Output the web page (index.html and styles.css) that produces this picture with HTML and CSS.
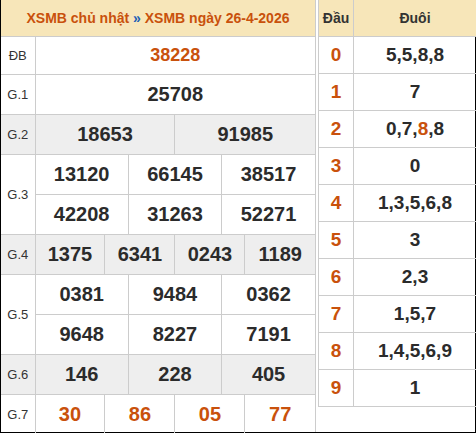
FILE: index.html
```html
<!DOCTYPE html>
<html lang="vi">
<head>
    <meta charset="UTF-8">
    <meta name="viewport" content="width=device-width, initial-scale=1.0">
    <title>XSMB ngày 26-4-2026</title>
    <link rel="stylesheet" href="styles.css">
</head>
<body>
    <div class="result-box">
        <div class="result-main">
            <table class="kq-table">
                <colgroup>
                    <col class="col-label">
                    <col span="12">
                </colgroup>
                <tr class="row-head">
                    <th colspan="13">XSMB chủ nhật <span class="sep">»</span> XSMB ngày 26-4-2026</th>
                </tr>
                <tr class="row-db">
                    <td class="label">ĐB</td>
                    <td colspan="12" class="num special">38228</td>
                </tr>
                <tr class="row-g1">
                    <td class="label">G.1</td>
                    <td colspan="12" class="num">25708</td>
                </tr>
                <tr class="row-40 alt">
                    <td class="label">G.2</td>
                    <td colspan="6" class="num">18653</td>
                    <td colspan="6" class="num">91985</td>
                </tr>
                <tr class="row-40">
                    <td class="label" rowspan="2">G.3</td>
                    <td colspan="4" class="num">13120</td>
                    <td colspan="4" class="num">66145</td>
                    <td colspan="4" class="num">38517</td>
                </tr>
                <tr class="row-40">
                    <td colspan="4" class="num">42208</td>
                    <td colspan="4" class="num">31263</td>
                    <td colspan="4" class="num">52271</td>
                </tr>
                <tr class="row-40 alt">
                    <td class="label">G.4</td>
                    <td colspan="3" class="num">1375</td>
                    <td colspan="3" class="num">6341</td>
                    <td colspan="3" class="num">0243</td>
                    <td colspan="3" class="num">1189</td>
                </tr>
                <tr class="row-40">
                    <td class="label" rowspan="2">G.5</td>
                    <td colspan="4" class="num">0381</td>
                    <td colspan="4" class="num">9484</td>
                    <td colspan="4" class="num">0362</td>
                </tr>
                <tr class="row-40">
                    <td colspan="4" class="num">9648</td>
                    <td colspan="4" class="num">8227</td>
                    <td colspan="4" class="num">7191</td>
                </tr>
                <tr class="row-40 alt">
                    <td class="label">G.6</td>
                    <td colspan="4" class="num">146</td>
                    <td colspan="4" class="num">228</td>
                    <td colspan="4" class="num">405</td>
                </tr>
                <tr class="row-g7">
                    <td class="label">G.7</td>
                    <td colspan="3" class="num red">30</td>
                    <td colspan="3" class="num red">86</td>
                    <td colspan="3" class="num red">05</td>
                    <td colspan="3" class="num red">77</td>
                </tr>
            </table>
        </div>

        <div class="result-side">
            <table class="loto-table">
                <colgroup>
                    <col class="col-dau">
                    <col>
                </colgroup>
                <tr>
                    <th>Đầu</th>
                    <th>Đuôi</th>
                </tr>
                <tr><td class="dau">0</td><td class="duoi">5,5,8,8</td></tr>
                <tr><td class="dau">1</td><td class="duoi">7</td></tr>
                <tr><td class="dau">2</td><td class="duoi">0,7,<span class="red">8</span>,8</td></tr>
                <tr><td class="dau">3</td><td class="duoi">0</td></tr>
                <tr><td class="dau">4</td><td class="duoi">1,3,5,6,8</td></tr>
                <tr><td class="dau">5</td><td class="duoi">3</td></tr>
                <tr><td class="dau">6</td><td class="duoi">2,3</td></tr>
                <tr><td class="dau">7</td><td class="duoi">1,5,7</td></tr>
                <tr><td class="dau">8</td><td class="duoi">1,4,5,6,9</td></tr>
                <tr><td class="dau">9</td><td class="duoi">1</td></tr>
            </table>
        </div>
    </div>
</body>
</html>
```

FILE: styles.css
```css
body {
    margin: 0;
    font-family: "Liberation Sans", Arial, sans-serif;
    color: #333;
    background: #fff;
}

.result-box {
    display: flex;
    align-items: flex-start;
    width: 476px;
    height: 433px;
    box-sizing: border-box;
    border: 1px solid #000;
    border-top: none;
}

.result-main {
    width: 315px;
    height: 432px;
    border-right: 1px solid #ccc;
    box-sizing: border-box;
}

.result-side {
    flex: 1;
    margin-left: 2px;
}

table {
    border-collapse: collapse;
    table-layout: fixed;
    border-style: hidden;
}

.kq-table {
    width: 314px;
}

.kq-table .col-label {
    width: 34px;
}

.kq-table th,
.kq-table td,
.loto-table th,
.loto-table td {
    border: 1px solid #ccc;
    padding: 0;
    text-align: center;
    vertical-align: middle;
}

.kq-table .row-head th {
    height: 36px;
    background: #f7e6b9;
    color: #c9510c;
    font-size: 14px;
    font-weight: bold;
}

.sep {
    color: #1d5fb5;
}

.row-db td {
    height: 37px;
}

.row-g1 td,
.row-40 td {
    height: 39px;
}

.row-g7 td {
    height: 38px;
}

.alt td {
    background: #eee;
}

.label {
    font-size: 13px;
    color: #333;
}

.num {
    font-size: 20px;
    font-weight: bold;
    color: #2b2b2b;
}

.num.special {
    font-size: 18px;
    color: #c9510c;
}

.red,
.num.red {
    color: #c9510c;
}

.loto-table {
    width: 158px;
    border-style: hidden;
    border-left: 1px solid #ccc;
    border-bottom: 1px solid #ccc;
}

.loto-table .col-dau {
    width: 35px;
}

.loto-table th {
    height: 36px;
    background: #f7e6b9;
    font-size: 14px;
    font-weight: bold;
    color: #333;
}

.loto-table td {
    height: 36px;
    font-size: 19px;
    font-weight: bold;
    color: #2b2b2b;
}

.loto-table td.dau {
    color: #c9510c;
}
```
